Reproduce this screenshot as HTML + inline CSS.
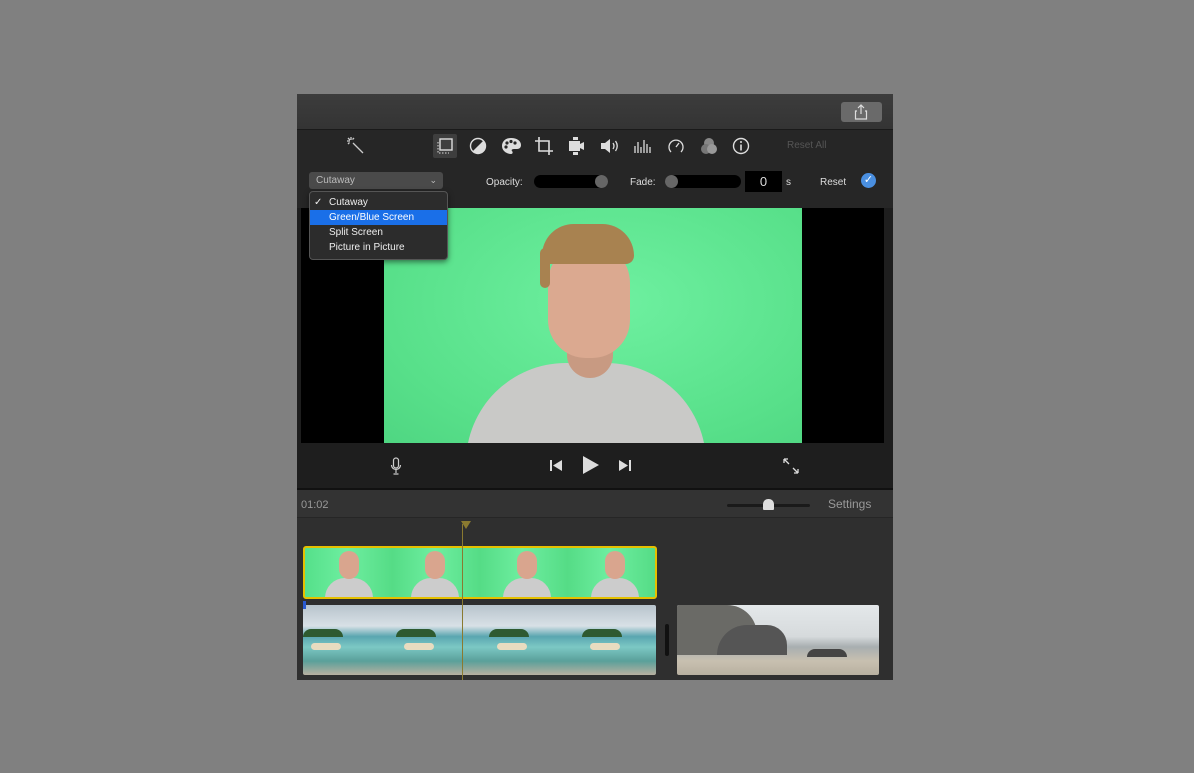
<!DOCTYPE html><html><head><style>
body{margin:0;width:1194px;height:773px;background:#808080;position:relative;overflow:hidden;font-family:"Liberation Sans",sans-serif}
.a{position:absolute}
.t{color:#ddd;font-size:10px}
</style></head><body>
<div class="a" style="left:297px;top:94px;width:596px;height:586px;background:#2a2a2a;overflow:hidden">
 <div class="a" style="left:0;top:0;width:596px;height:35px;background:linear-gradient(#3c3c3c,#343434);border-bottom:1px solid #1a1a1a"></div>
 <div class="a" style="left:544px;top:8px;width:41px;height:20px;background:#6a6a6a;border-radius:3px"></div>
 <svg class="a" style="left:557px;top:10px" width="14" height="16" viewBox="0 0 14 16"><path d="M7 1v9M4 4l3-3 3 3M3 7H1.5v8h11V7H11" fill="none" stroke="#ddd" stroke-width="1.2"/></svg>
 <div class="a" style="left:0;top:36px;width:596px;height:78px;background:#262626"></div>
 <svg class="a" style="left:48px;top:41px" width="20" height="20" viewBox="0 0 20 20" stroke="#ccc" fill="none" stroke-width="1.3"><path d="M8 8l10 10M6 2v3M2 6h3M3 3l2 2M9 3l-1.5 1.5M3 9l1.5-1.5"/></svg>
 <div class="a" style="left:136px;top:40px;width:24px;height:24px;background:#3e3e3e;border-radius:2px"></div>
 <svg class="a" style="left:139px;top:43px" width="18" height="18" viewBox="0 0 18 18" fill="none" stroke="#ddd" stroke-width="1.4"><rect x="4" y="2" width="12" height="11"/><path d="M2 5v11h11" stroke-dasharray="1.5 1.5" stroke-width="1"/></svg>
 <svg class="a" style="left:172px;top:43px" width="18" height="18" viewBox="0 0 18 18"><circle cx="9" cy="9" r="7.5" fill="none" stroke="#ddd" stroke-width="1.4"/><path d="M14.3 3.7A7.5 7.5 0 0 1 3.7 14.3Z" fill="#ddd"/></svg>
 <svg class="a" style="left:204px;top:43px" width="20" height="18" viewBox="0 0 20 18"><path d="M10 1C4 1 1 5 1 9c0 5 5 8 9 8 2 0 2-2 1-3s0-2 2-2h3c3 0 4-2 4-4 0-4-4-7-10-7z" fill="#ddd"/><circle cx="6" cy="6" r="1.6" fill="#262626"/><circle cx="10" cy="4.5" r="1.6" fill="#262626"/><circle cx="14" cy="6" r="1.6" fill="#262626"/><circle cx="5" cy="10" r="1.6" fill="#262626"/></svg>
 <svg class="a" style="left:237px;top:42px" width="20" height="20" viewBox="0 0 20 20" fill="none" stroke="#ddd" stroke-width="1.6"><path d="M5 1v14h14M1 5h14v14"/></svg>
 <svg class="a" style="left:270px;top:42px" width="18" height="20" viewBox="0 0 18 20" fill="#ddd"><rect x="6" y="1" width="5" height="3"/><rect x="2" y="5" width="11" height="10"/><path d="M13 8l4-2v8l-4-2z"/><rect x="6" y="16" width="5" height="3"/></svg>
 <svg class="a" style="left:303px;top:44px" width="20" height="16" viewBox="0 0 20 16"><path d="M1 5h4l5-4v14l-5-4H1z" fill="#ddd"/><path d="M13 5q2 3 0 6M15.5 3q3.5 5 0 10" fill="none" stroke="#ddd" stroke-width="1.3"/></svg>
 <svg class="a" style="left:336px;top:44px" width="20" height="16" viewBox="0 0 20 16" stroke="#ddd" stroke-width="1.3"><path d="M2 15V8M5 15V4M8 15V9M11 15V2M14 15V6M17 15V9"/></svg>
 <svg class="a" style="left:370px;top:43px" width="18" height="18" viewBox="0 0 18 18" fill="none" stroke="#ddd" stroke-width="1.3"><path d="M4 15A7 7 0 1 1 14 15"/><path d="M9 10l3-4"/></svg>
 <svg class="a" style="left:402px;top:43px" width="20" height="18" viewBox="0 0 20 18"><circle cx="10" cy="6" r="5" fill="#888"/><circle cx="7" cy="12" r="5" fill="#777"/><circle cx="13" cy="12" r="5" fill="#999"/></svg>
 <svg class="a" style="left:435px;top:43px" width="18" height="18" viewBox="0 0 18 18"><circle cx="9" cy="9" r="7.5" fill="none" stroke="#ddd" stroke-width="1.4"/><rect x="8.2" y="7.5" width="1.6" height="6" fill="#ddd"/><circle cx="9" cy="5" r="1" fill="#ddd"/></svg>
 <div class="a t" style="left:490px;top:46px;color:#555">Reset All</div>
 <div class="a" style="left:12px;top:78px;width:134px;height:17px;background:#4a4a4a;border-radius:3px;color:#bbb;font-size:10px;line-height:17px;padding-left:7px;box-sizing:border-box">Cutaway<span style="position:absolute;right:6px;font-size:9px">⌄</span></div>
 <div class="a t" style="left:189px;top:83px">Opacity:</div>
 <div class="a" style="left:237px;top:81px;width:74px;height:13px;background:#000;border-radius:7px"></div>
 <div class="a" style="left:298px;top:81px;width:13px;height:13px;background:#666;border-radius:50%"></div>
 <div class="a t" style="left:333px;top:83px">Fade:</div>
 <div class="a" style="left:368px;top:81px;width:76px;height:13px;background:#000;border-radius:7px"></div>
 <div class="a" style="left:368px;top:81px;width:13px;height:13px;background:#666;border-radius:50%"></div>
 <div class="a" style="left:448px;top:77px;width:37px;height:21px;background:#000;color:#ddd;font-size:13px;text-align:center;line-height:21px">0</div>
 <div class="a t" style="left:489px;top:83px">s</div>
 <div class="a t" style="left:523px;top:83px">Reset</div>
 <div class="a" style="left:564px;top:79px;width:15px;height:15px;background:#4a8fe0;border-radius:50%;color:#fff;font-size:11px;text-align:center;line-height:15px">✓</div>
 <div class="a" style="left:0;top:114px;width:596px;height:349px;background:#1e1e1e"></div>
 <div class="a" style="left:4px;top:114px;width:583px;height:235px;background:#000"></div>
 <div class="a" style="left:87px;top:114px;width:418px;height:235px;background:radial-gradient(ellipse at 55% 40%,#6ef0a0,#58e08a 70%,#4fd682);overflow:hidden">
  <div class="a" style="left:82px;top:155px;width:240px;height:120px;background:#c9c9c7;border-radius:100px 100px 0 0"></div>
  <div class="a" style="left:183px;top:140px;width:46px;height:30px;background:#c89a82;border-radius:0 0 23px 23px"></div>
  <div class="a" style="left:164px;top:34px;width:82px;height:116px;background:#dba990;border-radius:41px 41px 38px 38px"></div>
  <div class="a" style="left:158px;top:16px;width:92px;height:40px;background:#a88250;border-radius:46px 46px 12px 12px"></div>
  <div class="a" style="left:156px;top:40px;width:10px;height:40px;background:#a88250;border-radius:5px"></div>
 </div>
 <svg class="a" style="left:93px;top:363px" width="12" height="18" viewBox="0 0 12 18" fill="none" stroke="#ccc" stroke-width="1.2"><rect x="3.5" y="1" width="5" height="10" rx="2.5"/><path d="M1.5 8a4.5 4.5 0 0 0 9 0M6 12.5V16M3.5 17h5"/></svg>
 <svg class="a" style="left:252px;top:365px" width="14" height="13" viewBox="0 0 14 13" fill="#ddd"><rect x="1" y="1" width="2" height="11"/><path d="M13 1v11L4 6.5z"/></svg>
 <svg class="a" style="left:285px;top:361px" width="18" height="20" viewBox="0 0 18 20" fill="#ddd"><path d="M1 1v18l16-9z"/></svg>
 <svg class="a" style="left:321px;top:365px" width="14" height="13" viewBox="0 0 14 13" fill="#ddd"><rect x="11" y="1" width="2" height="11"/><path d="M1 1v11l9-5.5z"/></svg>
 <svg class="a" style="left:485px;top:363px" width="18" height="18" viewBox="0 0 18 18" fill="none" stroke="#ddd" stroke-width="1.3"><path d="M2 2l5 5M2 2v4M2 2h4M16 16l-5-5M16 16v-4M16 16h-4"/></svg>
 <div class="a" style="left:0;top:394px;width:596px;height:2px;background:#111"></div>
 <div class="a" style="left:0;top:396px;width:596px;height:27px;background:#333;border-bottom:1px solid #262626"></div>
 <div class="a" style="left:4px;top:405px;color:#999;font-size:11px">01:02</div>
 <div class="a" style="left:430px;top:410px;width:83px;height:3px;background:#1a1a1a;border-radius:2px"></div>
 <div class="a" style="left:466px;top:405px;width:11px;height:11px;background:#ddd;border-radius:5px 5px 1px 1px"></div>
 <div class="a" style="left:531px;top:403px;color:#999;font-size:12px">Settings</div>
 <div class="a" style="left:0;top:424px;width:596px;height:162px;background:#2f2f2f"></div>
 <div class="a" style="left:6px;top:452px;width:350px;height:49px;border:2px solid #e5c000;border-radius:3px;background:linear-gradient(90deg,#55e08a,#6eeea0 12%,#55dc86 25%,#6eeea0 37%,#55dc86 50%,#6eeea0 62%,#55dc86 75%,#6eeea0 87%,#55dc86);overflow:hidden">
  <div class="a" style="left:20px;top:30px;width:48px;height:22px;background:#ccc;border-radius:20px 20px 0 0"></div><div class="a" style="left:34px;top:3px;width:20px;height:28px;background:#d9a58e;border-radius:10px"></div>
  <div class="a" style="left:106px;top:30px;width:48px;height:22px;background:#ccc;border-radius:20px 20px 0 0"></div><div class="a" style="left:120px;top:3px;width:20px;height:28px;background:#d9a58e;border-radius:10px"></div>
  <div class="a" style="left:198px;top:30px;width:48px;height:22px;background:#ccc;border-radius:20px 20px 0 0"></div><div class="a" style="left:212px;top:3px;width:20px;height:28px;background:#d9a58e;border-radius:10px"></div>
  <div class="a" style="left:286px;top:30px;width:48px;height:22px;background:#ccc;border-radius:20px 20px 0 0"></div><div class="a" style="left:300px;top:3px;width:20px;height:28px;background:#d9a58e;border-radius:10px"></div>
 </div>
 <div class="a" style="left:6px;top:511px;width:353px;height:70px;background:linear-gradient(#b8c4cc 0%,#d8e0e6 30%,#5aa6b0 45%,#7cc8c4 60%,#5aa09a 80%,#b8b0a0 100%);border-radius:2px;overflow:hidden">
  <div class="a" style="left:0;top:24px;width:40px;height:8px;background:#2e5a30;border-radius:8px 8px 0 0"></div>
  <div class="a" style="left:93px;top:24px;width:40px;height:8px;background:#2e5a30;border-radius:8px 8px 0 0"></div>
  <div class="a" style="left:186px;top:24px;width:40px;height:8px;background:#2e5a30;border-radius:8px 8px 0 0"></div>
  <div class="a" style="left:279px;top:24px;width:40px;height:8px;background:#2e5a30;border-radius:8px 8px 0 0"></div>
  <div class="a" style="left:8px;top:38px;width:30px;height:7px;background:#e8dcc0;border-radius:4px"></div>
  <div class="a" style="left:101px;top:38px;width:30px;height:7px;background:#e8dcc0;border-radius:4px"></div>
  <div class="a" style="left:194px;top:38px;width:30px;height:7px;background:#e8dcc0;border-radius:4px"></div>
  <div class="a" style="left:287px;top:38px;width:30px;height:7px;background:#e8dcc0;border-radius:4px"></div>
 </div>
 <div class="a" style="left:6px;top:507px;width:3px;height:8px;background:#2a5ad0"></div>
 <div class="a" style="left:368px;top:530px;width:4px;height:32px;background:#111;border-radius:2px"></div>
 <div class="a" style="left:380px;top:511px;width:202px;height:70px;background:linear-gradient(#e4e8ea 0%,#d6dadc 45%,#a8aeb0 60%,#c8c0b0 80%,#b8b0a0 100%);border-radius:2px;overflow:hidden">
  <div class="a" style="left:0;top:0;width:80px;height:50px;background:#6a6a66;border-radius:0 30px 10px 0"></div>
  <div class="a" style="left:40px;top:20px;width:70px;height:30px;background:#555;border-radius:30px 20px 0 0"></div>
  <div class="a" style="left:130px;top:44px;width:40px;height:8px;background:#444;border-radius:8px 8px 0 0"></div>
 </div>
 <div class="a" style="left:164px;top:427px;width:0;height:0;border-left:5px solid transparent;border-right:5px solid transparent;border-top:8px solid #8a7a30"></div>
 <div class="a" style="left:165px;top:430px;width:1px;height:156px;background:#8a7a30"></div>
 <div class="a" style="left:12px;top:97px;width:137px;height:67px;background:#2c2c2c;border:1px solid #555;border-radius:4px;box-shadow:0 2px 6px rgba(0,0,0,.5)">
  <div class="a t" style="left:4px;top:5px;color:#eee">✓</div>
  <div class="a t" style="left:19px;top:5px;color:#eee">Cutaway</div>
  <div class="a t" style="left:0;top:18px;width:137px;height:15px;background:#1a6fe8;color:#fff;line-height:15px;padding-left:19px;box-sizing:border-box">Green/Blue Screen</div>
  <div class="a t" style="left:19px;top:35px;color:#eee">Split Screen</div>
  <div class="a t" style="left:19px;top:50px;color:#eee">Picture in Picture</div>
 </div>
</div>
</body></html>
